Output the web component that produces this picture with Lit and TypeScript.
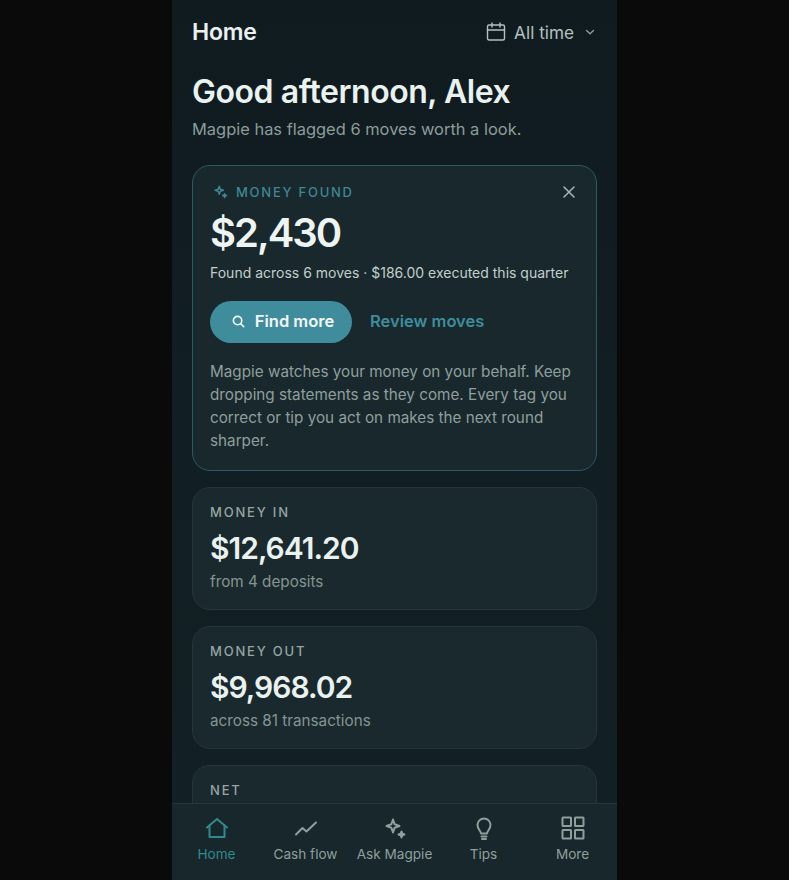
import { LitElement, html, css, svg } from 'lit';
import { customElement } from 'lit/decorators.js';

const sparkle = svg`<path d="M10 3.500l1.700 4.800 4.800 1.700-4.800 1.700L10 16.500l-1.700-4.800L3.500 10l4.800-1.700z"/><path d="M18.500 15.500l.8 2.200 2.200.8-2.200.8-.8 2.200-.8-2.200-2.200-.8 2.200-.8z" fill="currentColor"/>`;

const navItems = [
  { label: 'Home', active: true, icon: svg`<path d="M2 11.500L12 3l10 8.500"/><path d="M4.500 9.500V21h15V9.500"/>` },
  { label: 'Cash flow', active: false, icon: svg`<path d="M2 18.500l6.500-6.500 4 3.500 9.500-9"/>` },
  { label: 'Ask Magpie', active: false, icon: sparkle },
  {
    label: 'Tips',
    active: false,
    icon: svg`<path d="M9 17.500c0-2.500-3.500-4-3.500-8.500a6.500 6.500 0 0 1 13 0c0 4.500-3.500 6-3.500 8.500z"/><path d="M9.500 20.500h5M10 23h4"/>`,
  },
  {
    label: 'More',
    active: false,
    icon: svg`<rect x="1.500" y="1.500" width="8.500" height="8.500" rx="0.500"/><rect x="14" y="1.500" width="8.500" height="8.500" rx="0.500"/><rect x="1.500" y="14" width="8.500" height="8.500" rx="0.500"/><rect x="14" y="14" width="8.500" height="8.500" rx="0.500"/>`,
  },
];

const stats = [
  { label: 'MONEY IN', value: '$12,641.20', note: 'from 4 deposits' },
  { label: 'MONEY OUT', value: '$9,968.02', note: 'across 81 transactions' },
  { label: 'NET', value: '', note: '' },
];

@customElement('app-root')
export class AppRoot extends LitElement {
  static styles = css`
    :host {
      display: flex;
      justify-content: center;
      height: 100vh;
      background: #0a0a0a;
      font-family: Inter, 'Noto Sans', sans-serif;
      overflow: hidden;
    }
    svg {
      display: block;
      fill: none;
      stroke: currentColor;
      stroke-linecap: round;
      stroke-linejoin: round;
    }
    .phone {
      width: 445px;
      height: 880px;
      display: flex;
      flex-direction: column;
      background: linear-gradient(180deg, #101b20 0%, #122125 100%);
    }
    .scroll {
      flex: 1;
      min-height: 0;
      overflow: hidden;
      padding: 0 20px;
    }
    .top {
      height: 64px;
      display: flex;
      align-items: center;
      justify-content: space-between;
    }
    .title {
      font-size: 23px;
      font-weight: 600;
      letter-spacing: -0.2px;
      color: #e9f1ef;
    }
    .range {
      display: flex;
      align-items: center;
      color: #b4c1be;
      font-size: 17.200px;
      padding-right: 2px;
    }
    .range .cal {
      margin-right: 8px;
    }
    .range .chev {
      margin-left: 11px;
      color: #8a9a98;
    }
    h1 {
      margin: 8px 0 0;
      font-size: 32px;
      line-height: 40px;
      font-weight: 600;
      letter-spacing: -0.45px;
      color: #e9f2ef;
    }
    .sub {
      margin: 5px 0 0;
      font-size: 16.450px;
      line-height: 24px;
      color: #8b9c9a;
    }
    .card {
      box-sizing: border-box;
      border-radius: 18px;
      border: 1px solid #24363a;
      background: #1a292d;
      padding: 16px 17px 0;
      margin-bottom: 16px;
    }
    .hero {
      margin-top: 24px;
      height: 306px;
      border-color: #2d5a62;
      background: #18282c;
    }
    .hero-head {
      display: flex;
      align-items: center;
      color: #3f8793;
      height: 19px;
      font-size: 13px;
      font-weight: 500;
      letter-spacing: 1.750px;
    }
    .hero-head .spark {
      margin: 0 8px 0 3px;
    }
    .close {
      margin-left: auto;
      margin-right: 3px;
      color: #a9b8b5;
    }
    .amount {
      margin-top: 6px;
      font-size: 40px;
      line-height: 52px;
      font-weight: 600;
      letter-spacing: -2px;
      color: #edf4f1;
    }
    .found {
      margin-top: 4px;
      font-size: 14px;
      line-height: 20px;
      color: #c3cfcc;
    }
    .actions {
      margin-top: 18px;
      display: flex;
      align-items: center;
      gap: 18px;
    }
    .btn {
      box-sizing: border-box;
      width: 142px;
      height: 42px;
      padding: 0 0 2px 3px;
      border-radius: 21px;
      background: #3f8d9c;
      color: #f2f7f6;
      display: flex;
      align-items: center;
      justify-content: center;
      gap: 9px;
      font-size: 16.500px;
      font-weight: 600;
    }
    .link {
      padding-bottom: 2px;
      color: #3f8d9c;
      font-size: 16.500px;
      font-weight: 600;
    }
    .blurb {
      margin: 17px 0 0;
      font-size: 15.250px;
      line-height: 23px;
      color: #8f9f9d;
    }
    .stat {
      height: 123px;
    }
    .stat .label {
      font-size: 13px;
      line-height: 16px;
      font-weight: 500;
      letter-spacing: 1.800px;
      color: #96a5a3;
    }
    .stat .value {
      margin-top: 9px;
      font-size: 30px;
      line-height: 38px;
      font-weight: 600;
      letter-spacing: -1px;
      color: #e9f2ef;
    }
    .stat .note {
      margin-top: 4px;
      font-size: 15.250px;
      line-height: 22px;
      color: #849593;
    }
    nav {
      flex: none;
      height: 77px;
      box-sizing: border-box;
      border-top: 1px solid #25363a;
      background: #17272b;
      display: grid;
      grid-template-columns: repeat(5, 1fr);
    }
    .tab {
      display: flex;
      flex-direction: column;
      align-items: center;
      padding-top: 12px;
      color: #8f9f9d;
      font-size: 13.600px;
    }
    .tab span {
      margin-top: 6px;
      line-height: 17px;
      white-space: nowrap;
    }
    .tab.active {
      color: #318a8e;
    }
  `;

  render() {
    return html`
      <div class="phone">
        <div class="scroll">
          <div class="top">
            <div class="title">Home</div>
            <div class="range">
              <svg class="cal" width="20" height="20" viewBox="0 0 20 20" stroke-width="1.400">
                <rect x="1.500" y="3" width="17" height="15" rx="1.500" />
                <path d="M1.500 8h17M6 1v4M14 1v4" />
              </svg>
              All time
              <svg class="chev" width="10" height="10" viewBox="0 0 10 10" stroke-width="1.400">
                <path d="M1.500 3.500L5 6.800l3.500-3.300" />
              </svg>
            </div>
          </div>
          <h1>Good afternoon, Alex</h1>
          <p class="sub">Magpie has flagged 6 moves worth a look.</p>

          <div class="card hero">
            <div class="hero-head">
              <svg class="spark" width="15" height="15" viewBox="0 0 24 24" stroke-width="2.400">${sparkle}</svg>
              MONEY FOUND
              <svg class="close" width="14" height="14" viewBox="0 0 14 14" stroke-width="1.500">
                <path d="M2 2l10 10M12 2L2 12" />
              </svg>
            </div>
            <div class="amount">$2,430</div>
            <div class="found">Found across 6 moves · $186.00 executed this quarter</div>
            <div class="actions">
              <div class="btn">
                <svg width="15" height="15" viewBox="0 0 16 16" stroke-width="1.700">
                  <circle cx="7" cy="7" r="4.500" /><path d="M10.500 10.500l3 3" />
                </svg>
                Find more
              </div>
              <div class="link">Review moves</div>
            </div>
            <p class="blurb">
              Magpie watches your money on your behalf. Keep dropping statements as they come. Every tag you correct
              or tip you act on makes the next round sharper.
            </p>
          </div>

          ${stats.map(
            (s) => html`
              <div class="card stat">
                <div class="label">${s.label}</div>
                ${s.value
                  ? html`<div class="value">${s.value}</div>
                      <div class="note">${s.note}</div>`
                  : ''}
              </div>
            `
          )}
        </div>
        <nav>
          ${navItems.map(
            (n) => html`
              <div class="tab ${n.active ? 'active' : ''}">
                <svg width="24" height="24" viewBox="0 0 24 24" stroke-width="2">${n.icon}</svg>
                <span>${n.label}</span>
              </div>
            `
          )}
        </nav>
      </div>
    `;
  }
}
